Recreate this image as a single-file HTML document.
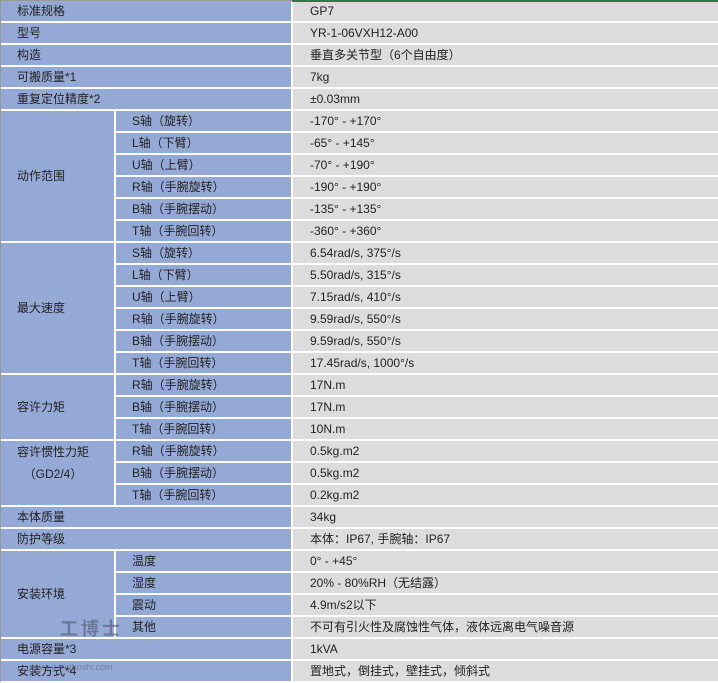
<!DOCTYPE html>
<html><head><meta charset="utf-8"><style>
body{margin:0;width:718px;height:682px;overflow:hidden;background:#fff;font-family:"Liberation Sans","Noto Sans CJK SC",sans-serif;font-size:12px;color:#222;position:relative}
table{position:absolute;left:0;top:1px;border-collapse:collapse;table-layout:fixed;width:718px}
td{height:19px;padding:1px 0 0 0;border-right:2px solid #fff;border-bottom:2px solid #fff;white-space:nowrap;line-height:19px;overflow:hidden}
td.a{background:#95a9d6;padding-left:17px;width:96px}
td.b{background:#95a9d6;padding-left:16px;width:159px}
td.c{background:#dcdcdc;padding-left:17px;border-right:none}
.ln{position:absolute;left:0;top:0;width:292px;height:1px;background:#999}
.gr{position:absolute;left:292px;top:0;width:426px;height:2px;background:#2e7a4a}
.lb{position:absolute;left:0;top:0;width:1px;height:682px;background:#999}
.wm{position:absolute;left:60px;top:615px;color:rgba(80,90,110,.6);font-size:18px;font-weight:bold;letter-spacing:3px}
.wm2{position:absolute;left:30px;top:662px;color:rgba(80,90,110,.5);font-size:9px}
</style></head><body>
<table>
<colgroup><col style="width:115px"><col style="width:177px"><col></colgroup>
<tr><td class="a" colspan="2">标准规格</td><td class="c">GP7</td></tr>
<tr><td class="a" colspan="2">型号</td><td class="c">YR-1-06VXH12-A00</td></tr>
<tr><td class="a" colspan="2">构造</td><td class="c">垂直多关节型（6个自由度）</td></tr>
<tr><td class="a" colspan="2">可搬质量*1</td><td class="c">7kg</td></tr>
<tr><td class="a" colspan="2">重复定位精度*2</td><td class="c">±0.03mm</td></tr>
<tr><td class="a" rowspan="6">动作范围</td><td class="b">S轴（旋转）</td><td class="c">-170° - +170°</td></tr>
<tr><td class="b">L轴（下臂）</td><td class="c">-65° - +145°</td></tr>
<tr><td class="b">U轴（上臂）</td><td class="c">-70° - +190°</td></tr>
<tr><td class="b">R轴（手腕旋转）</td><td class="c">-190° - +190°</td></tr>
<tr><td class="b">B轴（手腕摆动）</td><td class="c">-135° - +135°</td></tr>
<tr><td class="b">T轴（手腕回转）</td><td class="c">-360° - +360°</td></tr>
<tr><td class="a" rowspan="6">最大速度</td><td class="b">S轴（旋转）</td><td class="c">6.54rad/s, 375°/s</td></tr>
<tr><td class="b">L轴（下臂）</td><td class="c">5.50rad/s, 315°/s</td></tr>
<tr><td class="b">U轴（上臂）</td><td class="c">7.15rad/s, 410°/s</td></tr>
<tr><td class="b">R轴（手腕旋转）</td><td class="c">9.59rad/s, 550°/s</td></tr>
<tr><td class="b">B轴（手腕摆动）</td><td class="c">9.59rad/s, 550°/s</td></tr>
<tr><td class="b">T轴（手腕回转）</td><td class="c">17.45rad/s, 1000°/s</td></tr>
<tr><td class="a" rowspan="3">容许力矩</td><td class="b">R轴（手腕旋转）</td><td class="c">17N.m</td></tr>
<tr><td class="b">B轴（手腕摆动）</td><td class="c">17N.m</td></tr>
<tr><td class="b">T轴（手腕回转）</td><td class="c">10N.m</td></tr>
<tr><td class="a" rowspan="3" style="vertical-align:top;line-height:22px;padding-top:0">容许惯性力矩<br>&nbsp;&nbsp;（GD2/4）</td><td class="b">R轴（手腕旋转）</td><td class="c">0.5kg.m2</td></tr>
<tr><td class="b">B轴（手腕摆动）</td><td class="c">0.5kg.m2</td></tr>
<tr><td class="b">T轴（手腕回转）</td><td class="c">0.2kg.m2</td></tr>
<tr><td class="a" colspan="2">本体质量</td><td class="c">34kg</td></tr>
<tr><td class="a" colspan="2">防护等级</td><td class="c">本体：IP67, 手腕轴：IP67</td></tr>
<tr><td class="a" rowspan="4">安装环境</td><td class="b">温度</td><td class="c">0° - +45°</td></tr>
<tr><td class="b">湿度</td><td class="c">20% - 80%RH（无结露）</td></tr>
<tr><td class="b">震动</td><td class="c">4.9m/s2以下</td></tr>
<tr><td class="b">其他</td><td class="c">不可有引火性及腐蚀性气体，液体远离电气噪音源</td></tr>
<tr><td class="a" colspan="2">电源容量*3</td><td class="c">1kVA</td></tr>
<tr><td class="a" colspan="2">安装方式*4</td><td class="c">置地式，倒挂式，壁挂式，倾斜式</td></tr>
</table>
<div class="ln"></div><div class="gr"></div><div class="lb"></div>
<div class="wm">工博士</div>
<div class="wm2">www.gongboshi.com</div>
</body></html>
